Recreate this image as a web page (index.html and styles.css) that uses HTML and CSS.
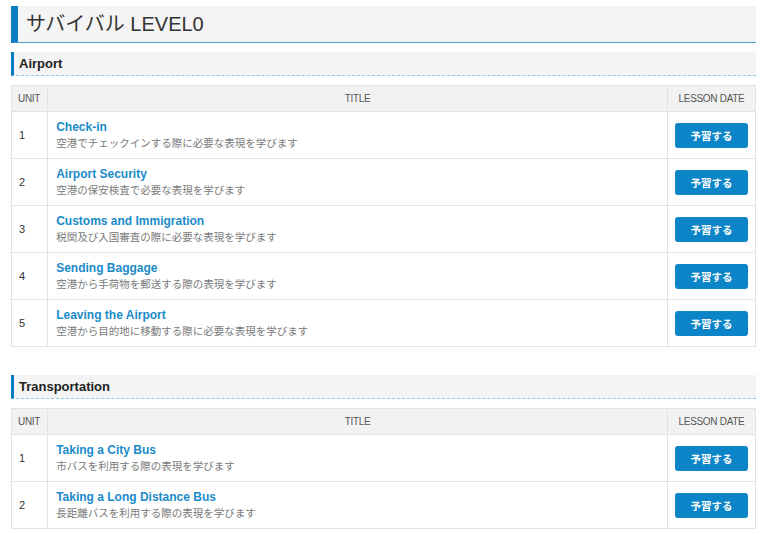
FILE: index.html
```html
<!DOCTYPE html>
<html lang="ja">
<head>
<meta charset="utf-8">
<title>サバイバル LEVEL0</title>
<link rel="stylesheet" href="styles.css">
</head>
<body>
<div class="page">
  <h1 class="page-title">サバイバル LEVEL0</h1>

  <section class="section">
    <h2 class="section-title">Airport</h2>
    <table class="lessons">
      <thead>
        <tr><th class="col-unit">UNIT</th><th class="col-title">TITLE</th><th class="col-date">LESSON DATE</th></tr>
      </thead>
      <tbody>
        <tr><td class="unit">1</td><td class="title"><a class="lesson-link" href="#">Check-in</a><span class="desc">空港でチェックインする際に必要な表現を学びます</span></td><td class="date"><a class="btn" href="#">予習する</a></td></tr>
        <tr><td class="unit">2</td><td class="title"><a class="lesson-link" href="#">Airport Security</a><span class="desc">空港の保安検査で必要な表現を学びます</span></td><td class="date"><a class="btn" href="#">予習する</a></td></tr>
        <tr><td class="unit">3</td><td class="title"><a class="lesson-link" href="#">Customs and Immigration</a><span class="desc">税関及び入国審査の際に必要な表現を学びます</span></td><td class="date"><a class="btn" href="#">予習する</a></td></tr>
        <tr><td class="unit">4</td><td class="title"><a class="lesson-link" href="#">Sending Baggage</a><span class="desc">空港から手荷物を郵送する際の表現を学びます</span></td><td class="date"><a class="btn" href="#">予習する</a></td></tr>
        <tr><td class="unit">5</td><td class="title"><a class="lesson-link" href="#">Leaving the Airport</a><span class="desc">空港から目的地に移動する際に必要な表現を学びます</span></td><td class="date"><a class="btn" href="#">予習する</a></td></tr>
      </tbody>
    </table>
  </section>

  <section class="section">
    <h2 class="section-title">Transportation</h2>
    <table class="lessons">
      <thead>
        <tr><th class="col-unit">UNIT</th><th class="col-title">TITLE</th><th class="col-date">LESSON DATE</th></tr>
      </thead>
      <tbody>
        <tr><td class="unit">1</td><td class="title"><a class="lesson-link" href="#">Taking a City Bus</a><span class="desc">市バスを利用する際の表現を学びます</span></td><td class="date"><a class="btn" href="#">予習する</a></td></tr>
        <tr><td class="unit">2</td><td class="title"><a class="lesson-link" href="#">Taking a Long Distance Bus</a><span class="desc">長距離バスを利用する際の表現を学びます</span></td><td class="date"><a class="btn" href="#">予習する</a></td></tr>
      </tbody>
    </table>
  </section>
</div>
</body>
</html>
```
FILE: styles.css
```css
html, body {
  margin: 0;
  padding: 0;
  overflow: hidden;
  background: #ffffff;
}
body {
  font-family: "Liberation Sans", Arial, "Noto Sans CJK JP", sans-serif;
  color: #333333;
}
.page {
  padding: 6px 12px 0 11px;
}
.page-title {
  margin: 0;
  height: 36px;
  line-height: 37px;
  padding-left: 8px;
  background: #f4f4f4;
  border-left: 7px solid #0a7cc1;
  border-bottom: 1px solid #4f9fd6;
  font-size: 20px;
  font-weight: normal;
  color: #333333;
  font-family: "Liberation Sans", "Noto Sans CJK JP", sans-serif;
}
.section {
  margin-top: 9px;
}
.section + .section {
  margin-top: 28px;
}
.section-title {
  margin: 0 0 9px 0;
  height: 23px;
  line-height: 23px;
  padding-left: 5px;
  background: #f4f4f4;
  border-left: 3px solid #0a7cc1;
  border-bottom: 1px dashed #8ec8ec;
  font-size: 13px;
  font-weight: bold;
  color: #222222;
}
.lessons {
  width: 100%;
  border-collapse: collapse;
  border: 1px solid #e3e3e3;
}
.lessons th {
  background: #f2f2f2;
  border: 1px solid #e3e3e3;
  padding: 7px 8px;
  line-height: 11px;
  font-size: 10px;
  font-weight: normal;
  color: #555555;
  letter-spacing: -0.3px;
  white-space: nowrap;
}
.lessons th.col-unit {
  width: 22px;
  padding: 7px 7px 7px 6px;
  text-align: left;
}
.lessons th.col-title {
  text-align: center;
}
.lessons th.col-date {
  width: 73px;
  padding: 7px 7px 7px 7px;
  text-align: center;
}
.lessons td {
  border: 1px solid #e3e3e3;
  padding: 7px 8px;
  vertical-align: middle;
}
.lessons td.unit {
  padding: 7px 7px 7px 7px;
  font-size: 11px;
  color: #333333;
}
.lesson-link {
  display: block;
  line-height: 16px;
  font-size: 12px;
  font-weight: bold;
  color: #1a8bc9;
  text-decoration: none;
}
.desc {
  display: block;
  line-height: 16px;
  font-size: 10.5px;
  color: #7a7a7a;
  font-family: "Noto Sans CJK JP", sans-serif;
}
.lessons td.date {
  padding: 0 7px 0 7px;
}
.btn {
  display: block;
  width: 73px;
  height: 25px;
  line-height: 25px;
  text-align: center;
  background: #0b85c7;
  color: #ffffff;
  border-radius: 3px;
  font-size: 10.5px;
  font-weight: bold;
  text-decoration: none;
  font-family: "Noto Sans CJK JP", sans-serif;
}
```
